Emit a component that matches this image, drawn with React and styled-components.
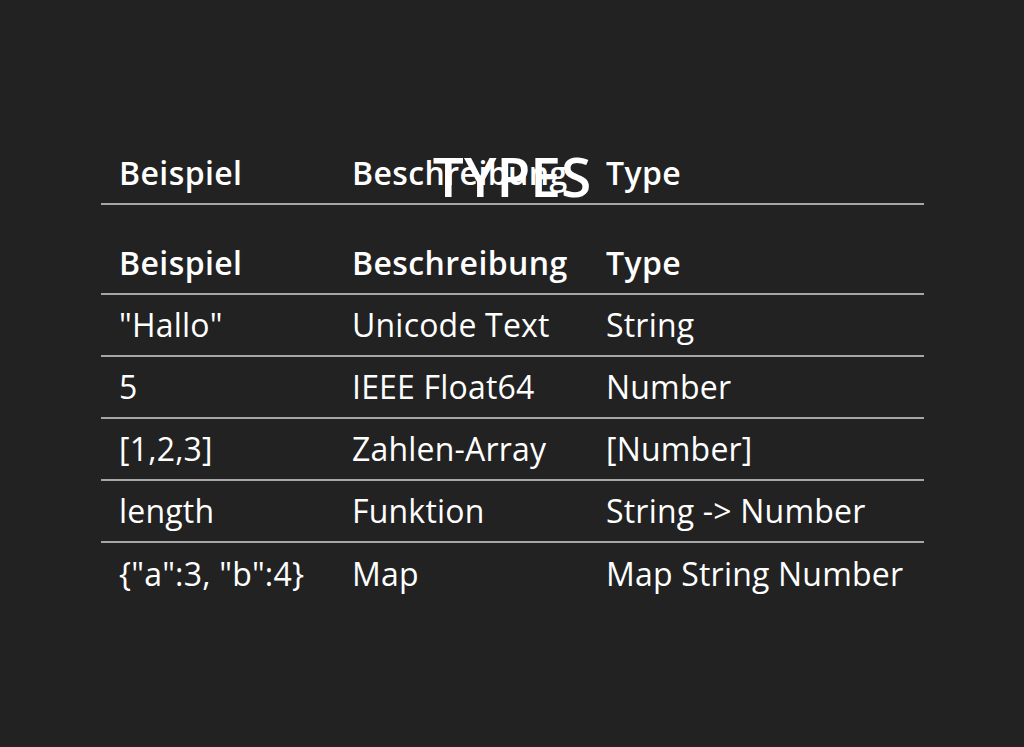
import React from 'react';
import styled, { createGlobalStyle } from 'styled-components';

const GlobalStyle = createGlobalStyle`
    html, body {
        margin: 0;
        padding: 0;
        background: #222222;
    }
    body {
        font-family: "Open Sans", "Noto Sans", sans-serif;
        color: #ffffff;
    }
`;

const Slide = styled.div`
    width: 1024px;
    height: 747px;
    background: #222222;
    padding-top: 143px;
    box-sizing: border-box;
    position: relative;
`;

const Title = styled.h2`
    position: absolute;
    top: 140px;
    left: 0;
    right: 0;
    margin: 0;
    text-align: center;
    font-size: 55px;
    font-weight: 600;
    line-height: 72px;
    letter-spacing: 0;
    color: #ffffff;
`;

const Table = styled.div`
    width: 823px;
    margin-left: 101px;
`;

const Row = styled.div`
    display: grid;
    grid-template-columns: 233px 254px 336px;
    height: 62px;
    padding-bottom: 2px;
    box-sizing: border-box;
    border-bottom: ${p => (p.last ? 'none' : '2px solid #a6a6a6')};
    margin-bottom: ${p => (p.spaced ? '28px' : '0')};
`;

const Cell = styled.div`
    padding-left: 18px;
    display: flex;
    align-items: center;
    font-size: 32px;
    font-weight: ${p => (p.head ? 600 : 400)};
    letter-spacing: ${p => (p.head ? '0.4px' : '0.2px')};
    white-space: nowrap;
`;

const columns = ['Beispiel', 'Beschreibung', 'Type'];

const rows = [
    ['"Hallo"', 'Unicode Text', 'String'],
    ['5', 'IEEE Float64', 'Number'],
    ['[1,2,3]', 'Zahlen-Array', '[Number]'],
    ['length', 'Funktion', 'String -> Number'],
    ['{"a":3, "b":4}', 'Map', 'Map String Number'],
];

const HeadRow = ({ spaced }) => (
    <Row spaced={spaced}>
        {columns.map(c => <Cell head key={c}>{c}</Cell>)}
    </Row>
);

export default function App() {
    return (
        <Slide>
            <GlobalStyle />
            <Table>
                <HeadRow spaced />
                <HeadRow />
                {rows.map((r, i) => (
                    <Row key={i} last={i === rows.length - 1}>
                        {r.map((c, j) => <Cell key={j}>{c}</Cell>)}
                    </Row>
                ))}
            </Table>
            <Title>TYPES</Title>
        </Slide>
    );
}
